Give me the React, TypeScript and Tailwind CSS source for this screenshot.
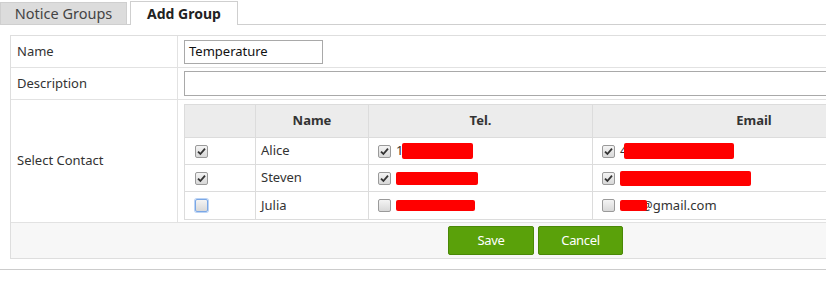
import React from "react";

type Contact = {
  name: string;
  checked: boolean;
  focus?: boolean;
  tel: { checked: boolean; prefix?: string; redact: [number, number] };
  email: { checked: boolean; prefix?: string; redact: [number, number]; rest?: string };
};

// redact = [width, height]
const CONTACTS: Contact[] = [
  {
    name: "Alice",
    checked: true,
    tel: { checked: true, prefix: "1", redact: [71, 16] },
    email: { checked: true, prefix: "4", redact: [110, 16] },
  },
  {
    name: "Steven",
    checked: true,
    tel: { checked: true, redact: [82, 13] },
    email: { checked: true, redact: [131, 15] },
  },
  {
    name: "Julia",
    checked: false,
    focus: true,
    tel: { checked: false, redact: [79, 11] },
    email: { checked: false, redact: [27, 11], rest: "@gmail.com" },
  },
];

function Check({ checked, focus }: { checked: boolean; focus?: boolean }) {
  return (
    <span
      className={
        "inline-flex w-[13px] h-[13px] shrink-0 items-center justify-center rounded-[2px] border bg-gradient-to-b from-[#f4f4f4] to-[#d8d8d8] " +
        (focus ? "border-[#7aa7e6] ring-1 ring-[#bcd4f5]" : "border-[#9a9a9a]")
      }
    >
      {checked && (
        <svg width="9" height="9" viewBox="0 0 9 9">
          <path d="M1 4.6 L3.4 7 L8 1.6" fill="none" stroke="#333" strokeWidth="1.8" />
        </svg>
      )}
    </span>
  );
}

function Redact({ w, h }: { w: number; h: number }) {
  return <span className="relative z-10 inline-block rounded-[2px] bg-[#ff0000]" style={{ width: w, height: h }} />;
}

export default function App() {
  return (
    <div className="w-[826px] h-[294px] overflow-hidden bg-white text-[13px] text-[#333] font-['Noto_Sans','Open_Sans',sans-serif]">
      {/* tabs */}
      <div className="flex items-end h-[25px] border-b border-[#cfcfcf] w-[826px]">
        <div className="w-[127px] h-[22px] bg-[#dcdcdc] border border-b-0 border-[#cfcfcf] flex items-center justify-center text-[14.5px] text-[#444]">
          Notice Groups
        </div>
        <div className="ml-[3px] w-[108px] h-[24px] -mb-px bg-white border border-b-0 border-[#cfcfcf] flex items-center justify-center text-[14px] font-bold text-[#222]">
          Add Group
        </div>
      </div>

      {/* form */}
      <div className="ml-[10px] mt-[10px] w-[1000px] border border-[#dedede]">
        <div className="flex h-[32px] border-b border-[#e2e2e2]">
          <div className="w-[167px] border-r border-[#e2e2e2] pl-[6px] flex items-center">Name</div>
          <div className="flex-1 pl-[6px] flex items-center">
            <div className="w-[139px] h-[24px] border border-[#a9a9a9] pl-[4px] flex items-center text-[13px] text-[#111]">
              Temperature
            </div>
          </div>
        </div>
        <div className="flex h-[32px] border-b border-[#e2e2e2]">
          <div className="w-[167px] border-r border-[#e2e2e2] pl-[6px] flex items-center">Description</div>
          <div className="flex-1 pl-[6px] flex items-center">
            <div className="w-full h-[25px] border border-[#a9a9a9]" />
          </div>
        </div>
        <div className="flex h-[123px] border-b border-[#e2e2e2]">
          <div className="w-[167px] border-r border-[#e2e2e2] pl-[6px] flex items-center">Select Contact</div>
          <div className="flex-1 pl-[6px] pt-[4px]">
            <div className="border border-[#dcdcdc]">
              <div className="flex h-[33px] bg-[#ececec] border-b border-[#dcdcdc] font-bold">
                <div className="w-[71px] border-r border-[#dcdcdc]" />
                <div className="w-[113px] border-r border-[#dcdcdc] flex items-center justify-center">Name</div>
                <div className="w-[224px] border-r border-[#dcdcdc] flex items-center justify-center">Tel.</div>
                <div className="w-[322px] flex items-center justify-center">Email</div>
              </div>
              {CONTACTS.map((c, i) => (
                <div
                  key={c.name}
                  className={"flex h-[27px] " + (i < CONTACTS.length - 1 ? "border-b border-[#dcdcdc]" : "")}
                >
                  <div className="w-[71px] border-r border-[#dcdcdc] pl-[10px] flex items-center">
                    <Check checked={c.checked} focus={c.focus} />
                  </div>
                  <div className="w-[113px] border-r border-[#dcdcdc] pl-[5px] flex items-center">{c.name}</div>
                  <div className="w-[224px] border-r border-[#dcdcdc] pl-[9px] flex items-center gap-[5px]">
                    <Check checked={c.tel.checked} />
                    <span className="flex items-center">
                      {c.tel.prefix && <span className="mr-[-1px]">{c.tel.prefix}</span>}
                      <Redact w={c.tel.redact[0]} h={c.tel.redact[1]} />
                    </span>
                  </div>
                  <div className="flex-1 pl-[9px] flex items-center gap-[5px]">
                    <Check checked={c.email.checked} />
                    <span className="flex items-center">
                      {c.email.prefix && <span className="mr-[-3px]">{c.email.prefix}</span>}
                      <Redact w={c.email.redact[0]} h={c.email.redact[1]} />
                      {c.email.rest && <span className="ml-[-6px]">{c.email.rest}</span>}
                    </span>
                  </div>
                </div>
              ))}
            </div>
          </div>
        </div>
        <div className="flex h-[35px] bg-[#f7f7f7] pl-[437px] items-center gap-[4px]">
          <button className="w-[86px] h-[29px] rounded-[2px] bg-[#5aa10a] border border-[#4a8806] text-white text-[13px] tracking-tight">
            Save
          </button>
          <button className="w-[85px] h-[29px] rounded-[2px] bg-[#5aa10a] border border-[#4a8806] text-white text-[13px] tracking-tight">
            Cancel
          </button>
        </div>
      </div>
      <div className="mt-[10px] border-t border-[#cccccc] w-[826px]" />
    </div>
  );
}
